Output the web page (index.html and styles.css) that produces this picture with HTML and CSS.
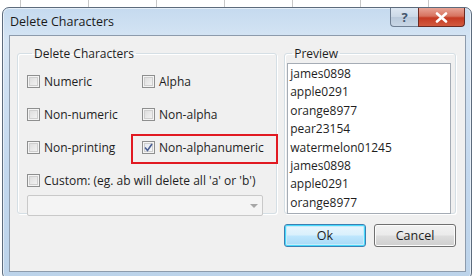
FILE: index.html
```html
<!DOCTYPE html>
<html lang="en">
<head>
  <meta charset="UTF-8">
  <title>Delete Characters</title>
  <link rel="stylesheet" href="styles.css">
</head>
<body>
  <div class="window">
    <div class="titlebar">
      <span class="title">Delete Characters</span>
      <div class="caption-buttons">
        <span class="cap-btn help">?</span>
        <span class="cap-btn close">
          <svg width="13" height="11" viewBox="0 0 13 11"><path d="M2 1.5 L11 9.5 M11 1.5 L2 9.5" stroke="#fff" stroke-width="2.6" stroke-linecap="round"/></svg>
        </span>
      </div>
    </div>

    <div class="client">
      <div class="groups">
        <fieldset class="group options">
          <legend>Delete Characters</legend>
          <div class="grid">
            <label class="check"><span class="box"></span>Numeric</label>
            <label class="check"><span class="box"></span>Alpha</label>
            <label class="check"><span class="box"></span>Non-numeric</label>
            <label class="check"><span class="box"></span>Non-alpha</label>
            <label class="check"><span class="box"></span>Non-printing</label>
            <label class="check"><span class="box checked"><svg width="9" height="9" viewBox="0 0 9 9"><path d="M1 4.5 L3.5 7.5 L8 1" fill="none" stroke="#4b5f93" stroke-width="1.6"/></svg></span>Non-alphanumeric</label>
          </div>
          <label class="check custom"><span class="box"></span>Custom: (eg. ab will delete all 'a' or 'b')</label>
          <div class="combo"><span class="arrow"></span></div>
          <div class="highlight"></div>
        </fieldset>

        <fieldset class="group preview">
          <legend>Preview</legend>
          <ul class="list">
            <li>james0898</li>
            <li>apple0291</li>
            <li>orange8977</li>
            <li>pear23154</li>
            <li>watermelon01245</li>
            <li>james0898</li>
            <li>apple0291</li>
            <li>orange8977</li>
          </ul>
        </fieldset>
      </div>

      <div class="buttons">
        <button class="btn default">Ok</button>
        <button class="btn">Cancel</button>
      </div>
    </div>
  </div>
</body>
</html>
```

FILE: styles.css
```css
body {
  margin: 0;
  height: 276px;
  overflow: hidden;
  font-family: "Open Sans", "Noto Sans", sans-serif;
  font-size: 12px;
  color: #1e1e1e;
  background: #fff repeating-linear-gradient(90deg, #c8c8c8 0 1px, transparent 1px 68px) 20px 0;
}
.window {
  margin: 7px 2px 0 2px;
  height: 264px;
  border: 1px solid #5d6b7c;
  border-radius: 7px 7px 6px 6px;
  background: linear-gradient(180deg, #c5daef 0%, #d6e5f4 12%, #c3d8ee 60%, #bcd3ea 100%);
  padding: 0 5px 6px 6px;
  display: flex;
  flex-direction: column;
  box-shadow: inset 0 0 0 1px rgba(255,255,255,0.55);
}
.titlebar {
  height: 27px;
  display: flex;
  justify-content: space-between;
  align-items: flex-start;
}
.title {
  margin-top: 5px;
  margin-left: 1px;
  font-size: 12.5px;
  color: #1a1a1a;
}
.caption-buttons {
  display: flex;
  margin-right: 1px;
}
.cap-btn {
  height: 19px;
  display: flex;
  align-items: center;
  justify-content: center;
  border: 1px solid #6f7f93;
  border-top: none;
  box-sizing: border-box;
}
.help {
  width: 28px;
  border-radius: 0 0 0 4px;
  border-right: none;
  background: linear-gradient(180deg, #dde7f2 0%, #cbd8e6 50%, #b9c9db 51%, #c9d7e6 100%);
  color: #44566e;
  font-size: 13px;
  font-weight: bold;
}
.close {
  width: 47px;
  border-radius: 0 0 4px 0;
  border-color: #6b2a22;
  background: linear-gradient(180deg, #e8a395 0%, #d7735f 45%, #c53a22 55%, #d25a3f 100%);
}
.client {
  flex: 1;
  background: #f0f0f0;
  border: 1px solid #8d9bac;
  display: flex;
  flex-direction: column;
  padding: 9px 9px 0 7px;
}
.groups {
  display: flex;
  gap: 7px;
}
.group {
  margin: 0;
  border: 1px solid #d5dfe5;
  border-radius: 3px;
  box-shadow: inset 1px 1px 0 #fff, 1px 1px 0 #fff;
  height: 169px;
  box-sizing: border-box;
}
.group legend {
  padding: 0 2px;
  margin-left: 5px;
  color: #1e1e1e;
}
.options {
  width: 262px;
  padding: 13px 0 0 9px;
  position: relative;
}
.grid {
  display: grid;
  grid-template-columns: 115px 1fr;
  row-gap: 20px;
}
.check {
  display: flex;
  align-items: center;
  gap: 4px;
  height: 13px;
}
.box {
  width: 13px;
  height: 13px;
  box-sizing: border-box;
  border: 1px solid #8e8f8f;
  background: linear-gradient(135deg, #d9d9d9, #f7f7f7);
  box-shadow: inset 0 0 0 1px #f4f4f4, inset 0 0 0 2px #cfcfcf;
  display: flex;
  align-items: center;
  justify-content: center;
}
.box.checked {
  background: linear-gradient(135deg, #dfe6f0, #fbfbfb);
}
.custom {
  margin-top: 20px;
}
.combo {
  margin-top: 8px;
  width: 236px;
  height: 21px;
  box-sizing: border-box;
  border: 1px solid #c9c9c9;
  border-radius: 2px;
  background: #f4f4f4;
  display: flex;
  justify-content: flex-end;
  align-items: center;
  padding-right: 4px;
}
.arrow {
  width: 0;
  height: 0;
  border-left: 4px solid transparent;
  border-right: 4px solid transparent;
  border-top: 4px solid #a6a6a6;
}
.highlight {
  position: absolute;
  left: 113px;
  top: 72px;
  width: 147px;
  height: 30px;
  border: 2px solid #e11a22;
  box-sizing: border-box;
}
.preview {
  width: 173px;
  padding: 0 4px 4px 2px;
}
.list {
  list-style: none;
  margin: 1px 0 0 0;
  padding: 1px 2px;
  height: 151px;
  box-sizing: border-box;
  border: 1px solid #a5acb5;
  background: #fff;
  line-height: 18.4px;
}
.buttons {
  display: flex;
  justify-content: flex-end;
  gap: 8px;
  margin-top: 10px;
}
.btn {
  width: 82px;
  height: 23px;
  font: inherit;
  font-size: 12.5px;
  color: #1e1e1e;
  border: 1px solid #707070;
  border-radius: 3px;
  background: linear-gradient(180deg, #f2f2f2 0%, #ebebeb 48%, #dddddd 52%, #cfcfcf 100%);
  box-shadow: inset 0 0 0 1px #fcfcfc;
}
.btn.default {
  border-color: #3c7fb1;
  box-shadow: inset 0 0 0 1px #48d8fb, inset 0 0 0 2px #c7ecfa;
  background: linear-gradient(180deg, #eaf6fd 0%, #d9f0fc 48%, #bee6fd 52%, #a7d9f5 100%);
}
```
